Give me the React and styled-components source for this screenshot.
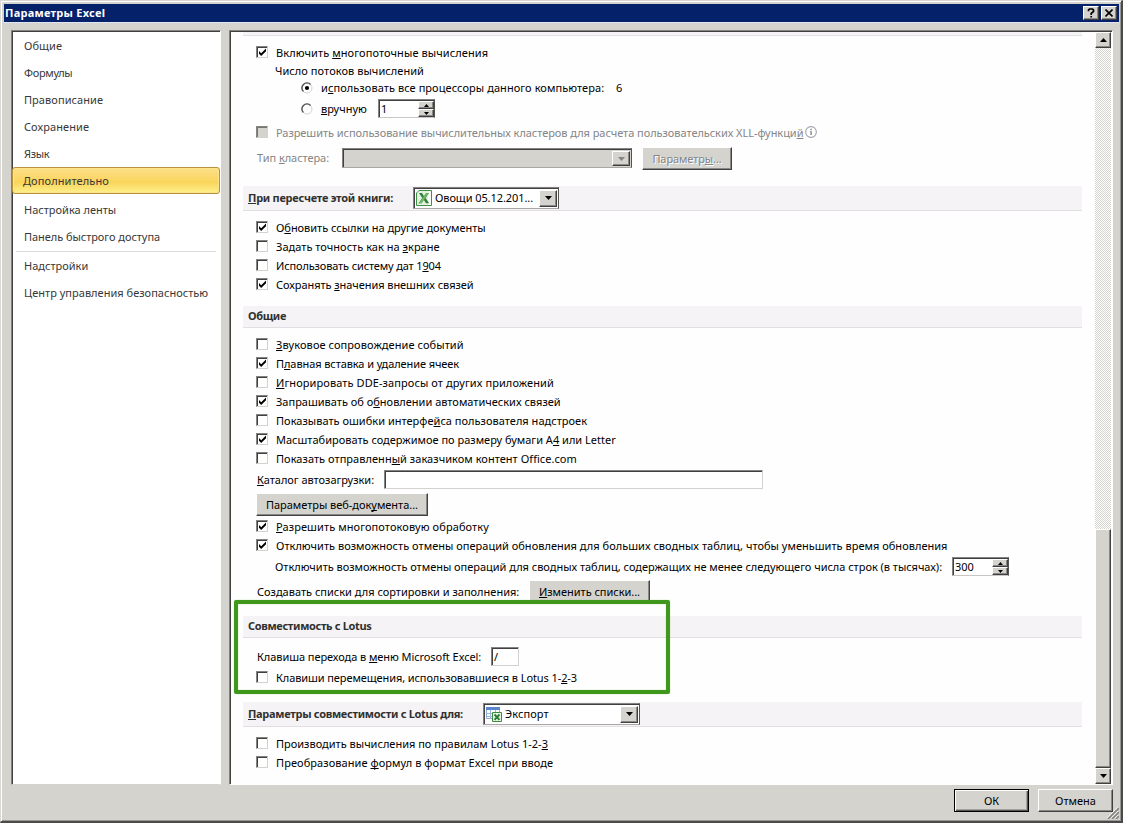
import styled, { createGlobalStyle, css } from 'styled-components'

const GlobalStyle = createGlobalStyle`
	* {
		box-sizing: border-box;
	}
	body {
		margin: 0;
		overflow: hidden;
		background: #d5d3ce;
		font: 11px/16px 'Noto Sans', 'Open Sans', sans-serif;
		color: #000;
	}
`

const raised = css`
	border: 1px solid;
	border-color: #fff #404040 #404040 #fff;
	box-shadow: inset -1px -1px #8b8985;
	background: #d5d3ce;
`

const sunken = css`
	border: 1px solid;
	border-color: #85837f #d4d2ce #d4d2ce #85837f;
	box-shadow: inset 1px 1px #404040;
	background: #fff;
`

const Dialog = styled.div`
	position: relative;
	display: flex;
	flex-direction: column;
	width: 1123px;
	height: 823px;
	padding: 3px 2px 0 3px;
	border: 1px solid #d9d7d3;
	border-right: 2px solid #4a4a49;
	border-bottom: 2px solid #4a4a49;
	box-shadow: inset 1px 1px #fff, inset -1px -1px #9a9894;
	background: #d5d3ce;
`

const TitleBar = styled.div`
	display: flex;
	align-items: center;
	height: 18px;
	padding: 0 2px 0 1px;
	background: #04216a;
	box-shadow: 0 1px #dfe5f3;
`

const Title = styled.div`
	flex: 1;
	font-weight: 700;
	letter-spacing: 0.25px;
	color: #fff;
`

const TitleButton = styled.button`
	${raised}
	display: flex;
	align-items: center;
	justify-content: center;
	width: 16px;
	height: 14px;
	margin-left: 2px;
	padding: 0;
	color: #000;
`

const Body = styled.div`
	display: flex;
	gap: 8px;
	height: 755px;
	margin: 8px 6px 0 7px;
`

const Nav = styled.div`
	${sunken}
	width: 210px;
	padding: 2px 0;
	border-right-color: #fff;
`

const NavItem = styled.div`
	height: 27px;
	padding-left: 12px;
	line-height: 26px;
	letter-spacing: ${(p) => p.$ls || 0}px;
	color: #383838;
	${(p) =>
		p.$active &&
		css`
			margin: -1px 0 3px;
			padding-left: 10px;
			border: 1px solid #b8913c;
			border-radius: 3px;
			box-shadow: inset 0 0 0 1px #fde48a;
			background: linear-gradient(#fce08a, #fbd766 45%, #f9d45a 55%, #fff08a);
		`}
`

const NavLine = styled.div`
	height: 1px;
	margin: 0 4px 1px;
	background: #dcdcdc;
`

const Pane = styled.div`
	${sunken}
	display: flex;
	flex: 1;
	padding: 1px 0 0 1px;
	border-color: #85837f #fff #fff #85837f;
	background: #fefefe;
`

const Content = styled.div`
	flex: 1;
	padding-left: 12px;
`

const Cropped = styled.div`
	width: 839px;
	height: 4px;
	margin-bottom: 7px;
	border-bottom: 1px solid #e3e1e3;
	background: #f5f3f5;
`

const Heading = styled.div`
	display: flex;
	align-items: center;
	width: 839px;
	height: ${(p) => p.$h || 22}px;
	margin: ${(p) => p.$top}px 0 ${(p) => p.$after ?? 7}px;
	padding: 0 0 1px 5px;
	border-bottom: 1px solid #e1dfe2;
	background: #f5f3f5;
	font-weight: 700;
	color: #303030;
`

const Row = styled.div`
	display: flex;
	align-items: center;
	height: ${(p) => p.$h || 21}px;
	margin-top: ${(p) => p.$top || 0}px;
	padding-left: ${(p) => p.$indent ?? 14}px;
	color: ${(p) => (p.$disabled ? '#858585' : '#000')};
`

const CheckRow = styled.div`
	display: flex;
	align-items: flex-start;
	height: 19px;
	margin-top: ${(p) => p.$top || 0}px;
	padding-left: 13px;
	line-height: 20px;
	color: ${(p) => (p.$disabled ? '#858585' : '#000')};
`

const Box = styled.span`
	${sunken}
	display: flex;
	flex: none;
	width: 12px;
	height: 12px;
	margin: 3px 8px 0 0;
	background: ${(p) => (p.$disabled ? '#d5d3ce' : '#fff')};
	${(p) => p.$disabled && 'box-shadow: inset 1px 1px #77756f;'}
`

const Caption = styled.span`
	flex: none;
	white-space: pre;
	width: ${(p) => (p.$w ? p.$w + 'px' : 'auto')};
	letter-spacing: ${(p) => p.$ls || 0}px;
	${(p) => p.$embossed && 'text-shadow: 1px 1px #fff;'}
`

const Key = styled.span`
	text-decoration: underline;
	text-decoration-thickness: 1px;
	text-decoration-skip-ink: none;
	text-underline-offset: 1px;
`

const RadioIcon = styled.svg`
	flex: none;
	width: 12px;
	height: 12px;
	margin-right: 8px;
`

const InfoIcon = styled.svg`
	flex: none;
	width: 12px;
	height: 12px;
	margin: 3px 0 0 2px;
`

const Field = styled.div`
	${sunken}
	width: ${(p) => p.$w}px;
	height: 19px;
	padding-left: 2px;
	line-height: 18px;
`

const Spin = styled(Field)`
	display: flex;
	border-color: #85837f #55534f #c9c7c3 #85837f;
`

const SpinValue = styled.span`
	flex: 1;
`

const SpinButtons = styled.div`
	display: flex;
	flex-direction: column;
	width: 16px;
	padding-top: 1px;
`

const SpinButton = styled.div`
	${raised}
	display: flex;
	flex: 1;
	align-items: center;
	justify-content: center;
`

const Select = styled.div`
	${sunken}
	display: flex;
	align-items: center;
	width: ${(p) => p.$w}px;
	height: ${(p) => p.$h || 22}px;
	padding: 2px 1px 1px 2px;
	border-color: #85837f #55534f #a9a7a3 #85837f;
	font-weight: 400;
	color: #000;
	${(p) => p.$disabled && 'background: #d5d3ce;'}
`

const SelectText = styled.span`
	flex: 1;
	padding-left: 3px;
	white-space: nowrap;
	letter-spacing: ${(p) => p.$ls || 0}px;
`

const SelectButton = styled.span`
	${raised}
	display: flex;
	align-items: center;
	justify-content: center;
	align-self: stretch;
	width: 18px;
`

const Button = styled.button`
	${raised}
	flex: none;
	width: ${(p) => p.$w}px;
	height: 23px;
	padding: 1px 0 0;
	font: inherit;
	color: ${(p) => (p.$disabled ? '#858585' : '#000')};
	${(p) =>
		p.$primary &&
		css`
			border-color: #000;
			box-shadow: inset 1px 1px #fff, inset -1px -1px #55534f, inset -2px -2px #a5a39f;
		`}
`

const ScrollBar = styled.div`
	display: flex;
	flex-direction: column;
	width: 16px;
	margin-right: 1px;
	background: repeating-conic-gradient(#d5d3ce 0 25%, #fff 0 50%) 0 0 / 2px 2px;
`

const ScrollButton = styled.div`
	${raised}
	display: flex;
	flex: none;
	align-items: center;
	justify-content: center;
	height: 16px;
`

const Thumb = styled.div`
	${raised}
	height: 239px;
	margin-top: auto;
`

const Footer = styled.div`
	display: flex;
	justify-content: flex-end;
	gap: 9px;
	padding: 4px 6px 0 0;
`

const Highlight = styled.div`
	position: absolute;
	left: 233px;
	top: 599px;
	width: 436px;
	height: 94px;
	border: 4px solid #3f981b;
	border-radius: 2px;
	box-shadow: 0 0 1px #6fc04c, inset 0 0 1px #6fc04c;
`

const Grip = styled.svg`
	position: absolute;
	right: 2px;
	bottom: 2px;
	width: 12px;
	height: 12px;
`

const Arrow = ({ up, small, color = '#000' }) => {
	const w = small ? 5 : 7
	const h = small ? 3 : 4
	return (
		<svg width={w} height={h} viewBox={`0 0 ${w} ${h}`}>
			<path
				fill={color}
				d={up ? `M0 ${h}L${w / 2} 0L${w} ${h}z` : `M0 0H${w}L${w / 2} ${h}z`}
			/>
		</svg>
	)
}

// "_" stands before the access key letter
const Text = ({ children, ...props }) => {
	const at = children.indexOf('_')
	if (at < 0) return <Caption {...props}>{children}</Caption>
	return (
		<Caption {...props}>
			{children.slice(0, at)}
			<Key>{children[at + 1]}</Key>
			{children.slice(at + 2)}
		</Caption>
	)
}

const Check = ({ checked, disabled, top, ls, info, children }) => (
	<CheckRow $top={top} $disabled={disabled}>
		<Box $disabled={disabled}>
			{checked && (
				<svg width='10' height='10' viewBox='0 0 10 10'>
					<path d='M2 4v2.8L4.2 9L9 4.2V1.6L4.2 6.2z' fill='#000' />
				</svg>
			)}
		</Box>
		<Text $ls={ls}>{children}</Text>
		{info && (
			<InfoIcon viewBox='0 0 11 11'>
				<circle cx='5.5' cy='5.5' r='4.9' fill='#fff' stroke='#a3a3b0' />
				<path d='M5 2.5h1.2v1.3H5zM4.5 4.8h1.7v3.4H5V5.6h-.5z' fill='#7d7d8c' />
			</InfoIcon>
		)}
	</CheckRow>
)

const Radio = ({ checked }) => (
	<RadioIcon viewBox='0 0 12 12'>
		<circle cx='6' cy='6' r='5' fill='#fff' stroke='#d4d2ce' />
		<path d='M2.4 9.6A5 5 0 0 1 9.6 2.4' fill='none' stroke='#55534f' strokeWidth='1.4' />
		{checked && <circle cx='6' cy='6' r='2.1' fill='#000' />}
	</RadioIcon>
)

const Spinner = ({ value, w }) => (
	<Spin $w={w}>
		<SpinValue>{value}</SpinValue>
		<SpinButtons>
			<SpinButton>
				<Arrow up small />
			</SpinButton>
			<SpinButton>
				<Arrow small />
			</SpinButton>
		</SpinButtons>
	</Spin>
)

const BookIcon = () => (
	<svg width='16' height='16' viewBox='0 0 16 16'>
		<path d='M3 .5h12.500v15H.5V3z' fill='#e3f2df' stroke='#3f8f45' />
		<path d='M12 1h3v14h-3z' fill='#f7fcf5' />
		<path d='M3 3h3l2 3.200L10.200 3H13L9.600 8L13.200 13.200H10L7.800 9.800L5.600 13.200H2.600L6.300 8z' fill='#2f7f3a' />
		<path d='M10.200 3H13L5.600 13.200H2.600z' fill='#6fb56a' />
	</svg>
)

const SheetIcon = () => (
	<svg width='16' height='16' viewBox='0 0 16 16'>
		<path d='M.5 1.500h13v11H.5z' fill='#fff' stroke='#8eabd6' />
		<path d='M0 1h14v3H0z' fill='#5b86cf' />
		<path d='M0 7.500h14M0 10.500h14M4.500 4v9M9.500 4v9' stroke='#9db8de' />
		<path d='M6.500 6.500h9v9h-9z' fill='#e8f5e4' stroke='#3b8a3f' />
		<path d='M8.500 8.500L13.500 13.800M13.500 8.500L8.500 13.800' stroke='#2a7d34' strokeWidth='1.900' />
	</svg>
)

const nav = [
	['Общие', 0.06],
	['Формулы', -0.3],
	['Правописание', 0.06],
	['Сохранение', 0.08],
	['Язык', -0.3],
	['Дополнительно', 0.1],
	['Настройка ленты', 0],
	['Панель быстрого доступа', -0.05],
	null,
	['Надстройки', 0],
	['Центр управления безопасностью', 0.02],
]

const App = () => {
	return (
		<>
			<GlobalStyle />
			<Dialog>
				<TitleBar>
					<Title>Параметры Excel</Title>
					<TitleButton>
						<svg width='8' height='10' viewBox='0 0 8 10'>
							<path d='M1.500 3.200V1.800L2.500 1H5.500L6.500 1.900V3.500L4.200 5.400V7M4.200 8V9.600' fill='none' stroke='#000' strokeWidth='1.700' />
						</svg>
					</TitleButton>
					<TitleButton>
						<svg width='8' height='8' viewBox='0 0 8 8'>
							<path d='M.5 .5L7.500 7.500M7.500 .5L.5 7.500' stroke='#000' strokeWidth='1.600' />
						</svg>
					</TitleButton>
				</TitleBar>

				<Body>
					<Nav>
						{nav.map((item, i) =>
							item ? (
								<NavItem key={i} $active={i === 5} $ls={item[1]}>
									{item[0]}
								</NavItem>
							) : (
								<NavLine key={i} />
							)
						)}
					</Nav>

					<Pane>
						<Content>
							<Cropped />
							<Check checked ls={0.09}>Включить _многопоточные вычисления</Check>
							<Row $h={18} $indent={32}>
								<Text $ls={0.06}>Число потоков вычислений</Text>
							</Row>
							<Row $h={16} $indent={58}>
								<Radio checked />
								<Text $w={295} $ls={0.07}>и_спользовать все процессоры данного компьютера:</Text>
								<Text>6</Text>
							</Row>
							<Row $top={2} $indent={58}>
								<Radio />
								<Text $w={57}>_вручную</Text>
								<Spinner value='1' w={57} />
							</Row>
							<Check disabled info top={4} ls={-0.05}>
								Разрешить использование вычислительных кластеров для расчета пользовательских XLL-функци_й
							</Check>
							<Row $top={5} $h={22} $disabled>
								<Text $w={85} $ls={-0.06}>Тип _кластера:</Text>
								<Select $w={290} $h={20} $disabled>
									<SelectText />
									<SelectButton>
										<Arrow color='#858585' />
									</SelectButton>
								</Select>
								<Row as='span' $h={23} $indent={10}>
									<Button $w={90} $disabled>
										<Text $embossed $ls={-0.1}>Параметр_ы...</Text>
									</Button>
								</Row>
							</Row>

							<Heading $top={17} $h={25}>
								<Text $w={165} $ls={-0.27}>_При пересчете этой книги:</Text>
								<Select $w={146}>
									<BookIcon />
									<SelectText $ls={-0.08}>Овощи 05.12.201...</SelectText>
									<SelectButton>
										<Arrow />
									</SelectButton>
								</Select>
							</Heading>
							<Check checked ls={-0.03}>О_бновить ссылки на другие документы</Check>
							<Check ls={0.03}>Задать точность как на _экране</Check>
							<Check ls={-0.14}>Использовать систему дат 1_904</Check>
							<Check checked ls={-0.06}>Сохранять _значения внешних связей</Check>

							<Heading $top={12}>
								<Text $ls={-0.35}>Общие</Text>
							</Heading>
							<Check ls={0.08}>_Звуковое сопровождение событий</Check>
							<Check checked ls={-0.09}>П_лавная вставка и удаление ячеек</Check>
							<Check ls={0.09}>_Игнорировать DDE-запросы от других приложений</Check>
							<Check checked>Запрашивать об о_бновлении автоматических связей</Check>
							<Check ls={0.02}>Показывать ошибки интерфе_йса пользователя надстроек</Check>
							<Check checked>Масштабировать содержимое по размеру бумаги A_4 или Letter</Check>
							<Check ls={0.04}>Показать отправленн_ый заказчиком контент Office.com</Check>
							<Row $top={1}>
								<Text $w={127} $ls={-0.03}>_Каталог автозагрузки:</Text>
								<Field $w={379} />
							</Row>
							<Row $top={3} $h={23} $indent={13}>
								<Button $w={172}>
									<Text $ls={-0.03}>Параметры веб-док_умента...</Text>
								</Button>
							</Row>
							<Check checked top={1} ls={0.09}>_Разрешить многопотоковую обработку</Check>
							<Check checked ls={0.02}>
								Отключить возможность отмены операций обновления для больших сводных таблиц, чтобы уменьшить время обновления
							</Check>
							<Row $top={1} $indent={32}>
								<Text $w={677} $ls={-0.02}>
									Отключить возможность отмены операций для сводных таблиц, содержащих не менее следующего числа строк (в тысячах):
								</Text>
								<Spinner value='300' w={57} />
							</Row>
							<Row $top={3} $h={23}>
								<Text $w={272}>Создавать списки для сортировки и заполнения:</Text>
								<Button $w={121}>
									<Text $ls={-0.03}>_Изменить списки...</Text>
								</Button>
							</Row>

							<Heading $top={13} $after={8}>
								<Text $ls={-0.34}>Совместимость с Lotus</Text>
							</Heading>
							<Row>
								<Text $w={234} $ls={-0.06}>Клавиша перехода в _меню Microsoft Excel:</Text>
								<Field $w={28}>/</Field>
							</Row>
							<Check top={1} ls={-0.09}>Клавиши перемещения, использовавшиеся в Lotus 1-_2-3</Check>

							<Heading $top={15} $h={25}>
								<Text $w={235} $ls={-0.3}>_Параметры совместимости с Lotus для:</Text>
								<Select $w={157}>
									<SheetIcon />
									<SelectText $ls={0.1}>Экспорт</SelectText>
									<SelectButton>
										<Arrow />
									</SelectButton>
								</Select>
							</Heading>
							<Check>Производить вычисления по правилам Lotus 1-2-_3</Check>
							<Check ls={0.07}>Преобразование _формул в формат Excel при вводе</Check>
						</Content>

						<ScrollBar>
							<ScrollButton>
								<Arrow up />
							</ScrollButton>
							<Thumb />
							<ScrollButton>
								<Arrow />
							</ScrollButton>
						</ScrollBar>
					</Pane>
				</Body>

				<Footer>
					<Button $w={75} $primary>ОК</Button>
					<Button $w={75}>Отмена</Button>
				</Footer>

				<Highlight />
				<Grip viewBox='0 0 12 12'>
					<path d='M1 12L12 1M5 12L12 5M9 12L12 9' stroke='#85837f' strokeWidth='1.600' />
					<path d='M0 11L11 0M4 11L11 4M8 11L11 8' stroke='#fff' strokeWidth='.7' />
				</Grip>
			</Dialog>
		</>
	)
}

export default App
